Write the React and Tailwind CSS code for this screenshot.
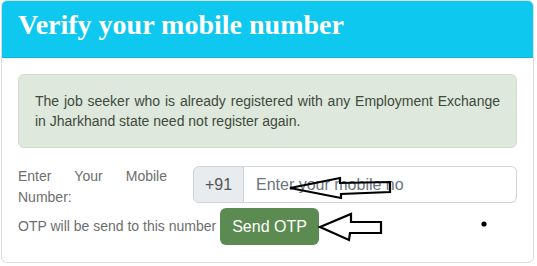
import React from 'react';

const Arrows = () => (
  <svg className="absolute left-0 top-0 pointer-events-none" width="537" height="266" viewBox="0 0 537 266">
    <g fill="none" stroke="#000" strokeWidth="2.2" strokeLinejoin="miter">
      {/* arrow into the mobile number field */}
      <path d="M290 188 L340 178 L340 183 L390 182 L390 192 L341 194 L341 198 Z" />
      {/* arrow at the send button */}
      <path d="M320 227 L351 214 L351 222 L381 222 L381 233 L350 233 L349 240 Z" />
    </g>
    <circle cx="484" cy="224" r="2.6" fill="#000" />
  </svg>
);

const App = () => {
  return (
    <div className="relative w-[537px] h-[266px] bg-white pl-[1px] font-['Liberation_Sans',Arial,sans-serif]">
      <div className="w-[533px] h-[263px] border border-[#dcdcdc] rounded-[6px] overflow-hidden bg-white">
        <div className="h-[57px] bg-[#0fc8ef] border-b border-[#0cb6dc] px-4 pt-[7px]">
          <h2 className="text-[28px] leading-[1.2] font-bold text-white font-['Liberation_Serif','Times_New_Roman',serif]">
            Verify your mobile number
          </h2>
        </div>

        <div className="px-4 pt-[16px]">
          <div className="bg-[#dfe8dc] border border-[#d2ddcd] rounded-[6px] px-4 py-4 text-[14px] leading-5 text-[#3d4a3c] text-justify">
            The job seeker who is already registered with any Employment Exchange in Jharkhand state need not register again.
          </div>

          <div className="flex mt-[18px]">
            <label className="w-[149px] shrink-0 text-[14px] leading-[21px] text-[#6e6e6e] text-justify">
              Enter Your Mobile Number:
            </label>
            <div className="flex flex-1 ml-[26px] h-[37px]">
              <span className="w-[51px] flex items-center justify-center bg-[#e9ecef] border border-[#ced4da] rounded-l-[6px] text-[16px] text-[#555]">
                +91
              </span>
              <input
                type="text"
                placeholder="Enter your mobile no"
                className="flex-1 min-w-0 border border-l-0 border-[#ced4da] rounded-r-[6px] px-3 text-[16px] text-[#495057] placeholder:text-[#6c757d] outline-none"
              />
            </div>
          </div>

          <div className="flex items-center">
            <span className="text-[14px] text-[#6e6e6e]">OTP will be send to this number</span>
            <button className="ml-[4px] h-[37px] px-3 bg-[#5b8b51] text-white text-[16px] rounded-[6px]">
              Send OTP
            </button>
          </div>
        </div>
      </div>
      <Arrows />
    </div>
  );
};

export default App;
